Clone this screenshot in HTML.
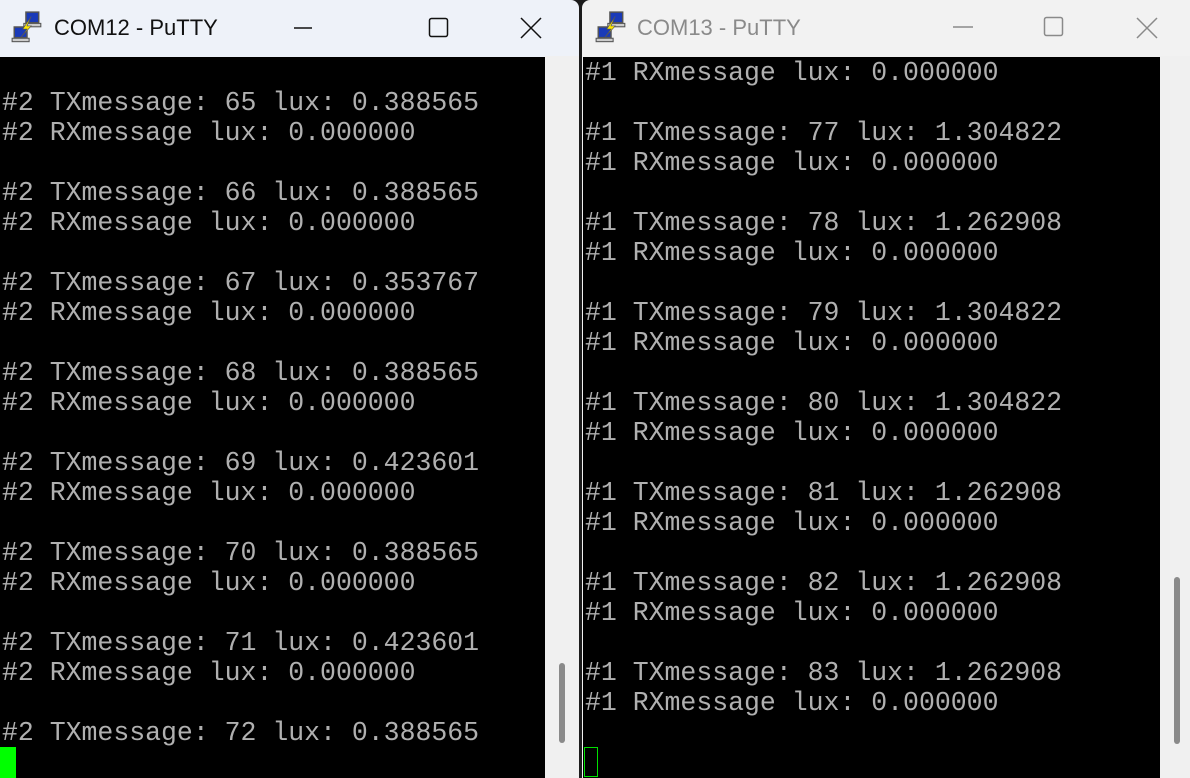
<!DOCTYPE html>
<html><head><meta charset="utf-8"><style>
html,body{margin:0;padding:0;width:1190px;height:778px;overflow:hidden;background:#1c1c1c;position:relative}
.win{position:absolute;top:0;height:778px;overflow:hidden}
.tb{position:absolute;left:0;right:0;top:0;height:56px}
.title{position:absolute;left:54px;top:15px;font:22px "Liberation Sans",sans-serif}
.term{position:absolute;top:57px;left:0;background:#000;height:721px}
.line{position:absolute;left:2px;font:26.5px/30px "Liberation Mono",monospace;color:#b0b0b0;white-space:pre;letter-spacing:0}
.sb{position:absolute;top:56px;height:722px}
.thumb{position:absolute;width:6px;border-radius:3px;background:#8a8a8a}
.ic{position:absolute;top:10px;left:10px}
</style></head><body>
<div class="win" style="left:0;width:579px;background:#eef2f9;border-top-right-radius:8px">
 <div class="tb">
  <svg class="ic" width="34" height="34" viewBox="0 0 16 16"><rect x="7.5" y="1" width="6" height="5" fill="#1a3ab8" stroke="#555" stroke-width=".7"/><rect x="6.5" y="6.3" width="8" height="1.6" fill="#ccc" stroke="#555" stroke-width=".5"/><rect x="2" y="8" width="6" height="5" fill="#1a3ab8" stroke="#555" stroke-width=".7"/><rect x="1" y="13.3" width="8" height="1.6" fill="#ccc" stroke="#555" stroke-width=".5"/><path d="M10 3 L6 9 L8 9 L5 13 L10 7.5 L8 7.5 Z" fill="#ffe800" stroke="#555" stroke-width=".3"/></svg>
  <div class="title" style="color:#111">COM12 - PuTTY</div>
  <svg style="position:absolute;left:290px;top:15px" width="260" height="26"><line x1="4" y1="13" x2="22" y2="13" stroke="#111" stroke-width="1.5"/><rect x="139.5" y="3.5" width="18" height="18" rx="2" fill="none" stroke="#111" stroke-width="1.5"/><path d="M231 3 L251 23 M251 3 L231 23" stroke="#111" stroke-width="1.5"/></svg>
 </div>
 <div class="term" style="width:545px">
  <div class="line" style="top:31px">#2 TXmessage: 65 lux: 0.388565</div>
  <div class="line" style="top:61px">#2 RXmessage lux: 0.000000</div>
  <div class="line" style="top:121px">#2 TXmessage: 66 lux: 0.388565</div>
  <div class="line" style="top:151px">#2 RXmessage lux: 0.000000</div>
  <div class="line" style="top:211px">#2 TXmessage: 67 lux: 0.353767</div>
  <div class="line" style="top:241px">#2 RXmessage lux: 0.000000</div>
  <div class="line" style="top:301px">#2 TXmessage: 68 lux: 0.388565</div>
  <div class="line" style="top:331px">#2 RXmessage lux: 0.000000</div>
  <div class="line" style="top:391px">#2 TXmessage: 69 lux: 0.423601</div>
  <div class="line" style="top:421px">#2 RXmessage lux: 0.000000</div>
  <div class="line" style="top:481px">#2 TXmessage: 70 lux: 0.388565</div>
  <div class="line" style="top:511px">#2 RXmessage lux: 0.000000</div>
  <div class="line" style="top:571px">#2 TXmessage: 71 lux: 0.423601</div>
  <div class="line" style="top:601px">#2 RXmessage lux: 0.000000</div>
  <div class="line" style="top:661px">#2 TXmessage: 72 lux: 0.388565</div>
  <div style="position:absolute;left:0;top:690px;width:16px;height:31px;background:#00ff00"></div>
 </div>
 <div class="sb" style="left:545px;width:34px;background:#f0f0f0"><div class="thumb" style="left:14px;top:607px;height:80px"></div></div>
</div>
<div class="win" style="left:582px;width:608px;background:#f2f2f2;border-top-left-radius:8px">
 <div class="tb">
  <svg class="ic" style="left:12px" width="34" height="34" viewBox="0 0 16 16"><rect x="7.5" y="1" width="6" height="5" fill="#1a3ab8" stroke="#555" stroke-width=".7"/><rect x="6.5" y="6.3" width="8" height="1.6" fill="#ccc" stroke="#555" stroke-width=".5"/><rect x="2" y="8" width="6" height="5" fill="#1a3ab8" stroke="#555" stroke-width=".7"/><rect x="1" y="13.3" width="8" height="1.6" fill="#ccc" stroke="#555" stroke-width=".5"/><path d="M10 3 L6 9 L8 9 L5 13 L10 7.5 L8 7.5 Z" fill="#ffe800" stroke="#555" stroke-width=".3"/></svg>
  <div class="title" style="color:#8a8a8a;left:55px">COM13 - PuTTY</div>
  <svg style="position:absolute;left:368px;top:15px" width="240" height="26"><line x1="3" y1="12" x2="23" y2="12" stroke="#8a8a8a" stroke-width="1.5"/><rect x="94.5" y="2.5" width="18" height="18" rx="2" fill="none" stroke="#8a8a8a" stroke-width="1.5"/><path d="M187 3 L207 23 M207 3 L187 23" stroke="#8a8a8a" stroke-width="1.5"/></svg>
 </div>
 <div class="term" style="width:578px;left:1px">
  <div class="line" style="top:1px">#1 RXmessage lux: 0.000000</div>
  <div class="line" style="top:61px">#1 TXmessage: 77 lux: 1.304822</div>
  <div class="line" style="top:91px">#1 RXmessage lux: 0.000000</div>
  <div class="line" style="top:151px">#1 TXmessage: 78 lux: 1.262908</div>
  <div class="line" style="top:181px">#1 RXmessage lux: 0.000000</div>
  <div class="line" style="top:241px">#1 TXmessage: 79 lux: 1.304822</div>
  <div class="line" style="top:271px">#1 RXmessage lux: 0.000000</div>
  <div class="line" style="top:331px">#1 TXmessage: 80 lux: 1.304822</div>
  <div class="line" style="top:361px">#1 RXmessage lux: 0.000000</div>
  <div class="line" style="top:421px">#1 TXmessage: 81 lux: 1.262908</div>
  <div class="line" style="top:451px">#1 RXmessage lux: 0.000000</div>
  <div class="line" style="top:511px">#1 TXmessage: 82 lux: 1.262908</div>
  <div class="line" style="top:541px">#1 RXmessage lux: 0.000000</div>
  <div class="line" style="top:601px">#1 TXmessage: 83 lux: 1.262908</div>
  <div class="line" style="top:631px">#1 RXmessage lux: 0.000000</div>
  <div style="position:absolute;left:1px;top:690px;width:12px;height:28px;border:1.5px solid #00e000"></div>
 </div>
 <div class="sb" style="left:578px;width:30px;background:#f0f0f0"><div class="thumb" style="left:14px;top:521px;height:167px"></div></div>
</div>
</body></html>
